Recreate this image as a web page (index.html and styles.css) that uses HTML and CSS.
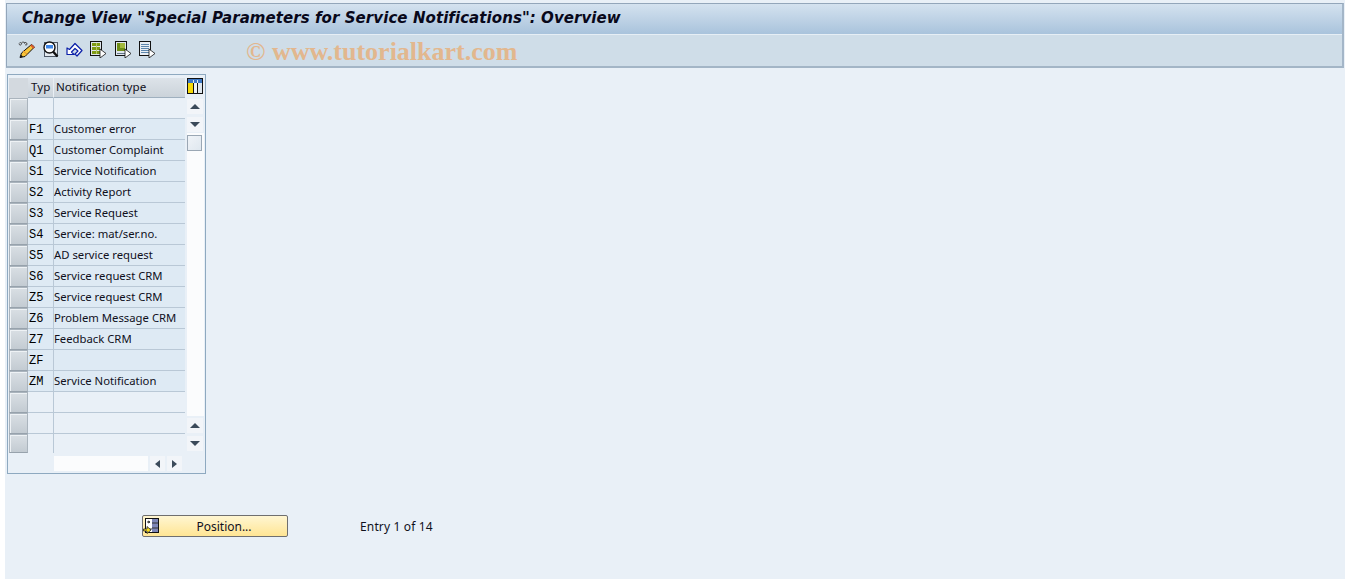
FILE: index.html
```html
<!DOCTYPE html>
<html lang="en">
<head>
<meta charset="utf-8">
<title>Change View</title>
<link rel="stylesheet" href="styles.css">
</head>
<body>
<div class="window">
  <header class="head">
    <h1 class="title">Change View "Special Parameters for Service Notifications": Overview</h1>
    <div class="toolbar">
      <svg class="tool" width="17" height="17" viewBox="0 0 17 17"><path d="M1 2.500c1-1.500 3-1 2.500.5S1 4.500 1.500 3M3.500 2c1-1.500 3-1 3 .5M6 2c1-1 3-.5 3 1s-1.500 1-2 .5" fill="none" stroke="#444" stroke-width="1"/><path d="M13.500 3.500l3 2.500-9.500 9.500-5 1 1.500-4.500z" fill="#f8c53a" stroke="#111" stroke-width="1"/><path d="M5 10l4.500 3.500" stroke="#e8902a" stroke-width="1"/><path d="M13 4l3 3" stroke="#d85a30" stroke-width="2"/><path d="M2 16.800l1-3 2 2z" fill="#111"/></svg>
      <svg class="tool" width="17" height="17" viewBox="0 0 17 17"><rect x="2.500" y="1.500" width="13" height="14" fill="#e4eaf0" stroke="#4d5866"/><circle cx="7.500" cy="6.500" r="5.500" fill="#fff" stroke="#111" stroke-width="1.400"/><path d="M4 4h7v3.500H4z" fill="#3f86e6"/><path d="M11 10.500l4.500 5" stroke="#111" stroke-width="2.400"/></svg>
      <svg class="tool" width="17" height="17" viewBox="0 0 17 17"><path d="M1 7V13.500H8L5.500 11 9 7.500 12 10 9 13l2 2 5-5.500-7-7-5.500 6z" fill="#fff" stroke="#0a1fa8" stroke-width="1.200" stroke-linejoin="round"/></svg>
      <svg class="tool" width="17" height="17" viewBox="0 0 17 17" shape-rendering="crispEdges"><rect x=".5" y=".5" width="11" height="14" fill="#dfe6ee" stroke="#111"/><path d="M2 2h8v3H2zM2 6h8v3H2zM2 10h8v3H2z" fill="#7f9a16"/><path d="M6 2v11" stroke="#b8cc60"/><path d="M10 8l6 4.500-6 4.500z" fill="#fff" stroke="#111" stroke-width=".8" shape-rendering="auto"/></svg>
      <svg class="tool" width="17" height="17" viewBox="0 0 17 17" shape-rendering="crispEdges"><rect x=".5" y=".5" width="11" height="14" fill="#dfe6ee" stroke="#111"/><rect x="2" y="2" width="8" height="8" fill="#6f8e16"/><path d="M5 2h5v5H5z" fill="#a2b83c"/><path d="M2 12h8" stroke="#66788c"/><path d="M10 8l6 4.500-6 4.500z" fill="#fff" stroke="#111" stroke-width=".8" shape-rendering="auto"/></svg>
      <svg class="tool" width="17" height="17" viewBox="0 0 17 17" shape-rendering="crispEdges"><rect x=".5" y=".5" width="11" height="14" fill="#e8eef4" stroke="#111"/><path d="M2 3h8M2 5h8M2 7h8M2 9h8M2 11h8" stroke="#5d86ad"/><path d="M10 8l6 4.500-6 4.500z" fill="#fff" stroke="#111" stroke-width=".8" shape-rendering="auto"/></svg>
      <span class="mark">© www.tutorialkart.com</span>
    </div>
  </header>

  <main class="content">
    <section class="panel">
      <div class="grid">
        <div class="row row-head">
          <span class="sel sel-corner"></span>
          <span class="cell c-typ head-cell head-typ">Typ</span>
          <span class="cell c-name head-cell">Notification type</span>
        </div>
        <div class="row"><span class="sel"></span><span class="cell c-typ"></span><span class="cell c-name"></span></div>
        <div class="row filled"><span class="sel"></span><span class="cell c-typ">F1</span><span class="cell c-name">Customer error</span></div>
        <div class="row filled"><span class="sel"></span><span class="cell c-typ">Q1</span><span class="cell c-name">Customer Complaint</span></div>
        <div class="row filled"><span class="sel"></span><span class="cell c-typ">S1</span><span class="cell c-name">Service Notification</span></div>
        <div class="row filled"><span class="sel"></span><span class="cell c-typ">S2</span><span class="cell c-name">Activity Report</span></div>
        <div class="row filled"><span class="sel"></span><span class="cell c-typ">S3</span><span class="cell c-name">Service Request</span></div>
        <div class="row filled"><span class="sel"></span><span class="cell c-typ">S4</span><span class="cell c-name">Service: mat/ser.no.</span></div>
        <div class="row filled"><span class="sel"></span><span class="cell c-typ">S5</span><span class="cell c-name">AD service request</span></div>
        <div class="row filled"><span class="sel"></span><span class="cell c-typ">S6</span><span class="cell c-name">Service request CRM</span></div>
        <div class="row filled"><span class="sel"></span><span class="cell c-typ">Z5</span><span class="cell c-name">Service request CRM</span></div>
        <div class="row filled"><span class="sel"></span><span class="cell c-typ">Z6</span><span class="cell c-name">Problem Message CRM</span></div>
        <div class="row filled"><span class="sel"></span><span class="cell c-typ">Z7</span><span class="cell c-name">Feedback CRM</span></div>
        <div class="row filled"><span class="sel"></span><span class="cell c-typ">ZF</span><span class="cell c-name"></span></div>
        <div class="row filled"><span class="sel"></span><span class="cell c-typ">ZM</span><span class="cell c-name">Service Notification</span></div>
        <div class="row"><span class="sel"></span><span class="cell c-typ"></span><span class="cell c-name"></span></div>
        <div class="row"><span class="sel"></span><span class="cell c-typ"></span><span class="cell c-name"></span></div>
        <div class="row row-last"><span class="sel"></span><span class="cell c-typ"></span><span class="cell c-name"></span></div>
        <div class="hbar">
          <span class="hbar-track"></span>
          <span class="sbtn sbtn-h"><i class="arrow a-left"></i></span>
          <span class="sbtn sbtn-h"><i class="arrow a-right"></i></span>
        </div>
      </div>
      <div class="vbar">
        <svg class="config" width="16" height="16" viewBox="0 0 17 17" shape-rendering="crispEdges"><rect x="0" y="0" width="17" height="17" fill="#111"/><rect x="1" y="1" width="15" height="4" fill="#3d78c4"/><rect x="1" y="5" width="5" height="11" fill="#f5d90a"/><rect x="7" y="5" width="4" height="11" fill="#eef2f6"/><rect x="12" y="5" width="4" height="11" fill="#dfe7ee"/><path d="M6 2h1v3H6zM11 2h1v3h-1z" fill="#dce8f4"/></svg>
        <span class="sbtn sbtn-v first"><i class="arrow a-up"></i></span>
        <span class="sbtn sbtn-v second"><i class="arrow a-down"></i></span>
        <span class="vtrack"><span class="thumb"></span></span>
        <span class="sbtn sbtn-v third"><i class="arrow a-up"></i></span>
        <span class="sbtn sbtn-v second"><i class="arrow a-down"></i></span>
      </div>
    </section>

    <div class="actions">
      <button class="btn" type="button">
        <svg class="btn-icon" width="16" height="17" viewBox="0 0 16 17"><rect x="2.500" y=".5" width="13" height="14" fill="#fff" stroke="#111"/><rect x="9" y="1" width="6" height="13" fill="#7e86b8"/><path d="M4 4h3M5 3l2 1-2 1M5 11h4M9 5h6M9 10h6" stroke="#333" fill="none"/><path d="M.5 11h3.500V8.500L8 12l-4 3.500V13H.5z" fill="#f7dc1e" stroke="#222" stroke-width=".8"/></svg>
        <span class="btn-label">Position...</span>
      </button>
      <span class="entry">Entry 1 of 14</span>
    </div>
  </main>
</div>
</body>
</html>
```

FILE: styles.css
```css
* { box-sizing: border-box; }

html, body { margin: 0; height: 100%; background: #fff; overflow: hidden; }

body { font-family: "Noto Sans", "DejaVu Sans", sans-serif; font-size: 12px; color: #10101c; }

.window {
  width: 1340px;
  height: 579px;
  margin-left: 5px;
  padding-top: 3px;
  background: #e9f0f7;
}

.head {
  margin: 0 1px;
  border: 1px solid #93a6ba;
  border-right-width: 2px;
  border-right-color: #a4b6c8;
  border-bottom: 2px solid #a3b5c6;
  box-shadow: inset 0 1px 0 #dbe6f0;
}

.title {
  margin: 0;
  height: 31px;
  padding: 4px 0 0 15px;
  background: linear-gradient(#d4e2ef, #a9c3dc);
  border-bottom: 1px solid #e6eef5;
  font: italic 700 15px/20px "DejaVu Sans", sans-serif;
  letter-spacing: 0.07px;
  color: #08081a;
  white-space: nowrap;
}

.toolbar {
  display: flex;
  align-items: center;
  height: 31px;
  padding: 0 0 3px 11px;
  background: #cfdde8;
}

.tool { margin-right: 7px; flex: none; }
.tool:nth-child(4) { margin-right: 8px; }

.mark {
  margin-left: 83px;
  margin-top: 5px;
  font: 700 26px/28px "Liberation Serif", serif;
  color: #e2b78e;
  white-space: nowrap;
}

.content { padding: 6px 0 0 2px; }

.panel {
  display: flex;
  width: 199px;
  height: 400px;
  padding: 3px 1px 0 1px;
  border: 1px solid #8ea9c0;
  background: #e9f0f7;
}

.grid { width: 176px; flex: none; }

.row { display: flex; height: 21px; }

.row-head { height: 20px; }
.row-last { height: 19px; }

.sel {
  width: 19px;
  flex: none;
  background: linear-gradient(#d9dfe4, #c3cbd2);
  border: 1px solid #aab4bd;
  border-bottom-color: #97a2ac;
  box-shadow: inset 1px 1px 0 #eef2f5;
}

.sel-corner { background: #d3d9df; border-color: #d3d9df; box-shadow: none; }

.cell {
  display: block;
  border-bottom: 1px solid #b9c8d6;
  border-right: 1px solid #b9c8d6;
  font-size: 11.3px;
  line-height: 20px;
  white-space: nowrap;
  overflow: hidden;
}

.c-typ {
  width: 26px;
  flex: none;
  padding-left: 1px;
  font: 400 12px/22px "Liberation Mono", monospace;
  color: #000;
}

.c-name { width: 131px; flex: none; padding-left: 0; border-right: 0; }

.filled .cell { background: #deeaf4; }
.row-last .cell { border-bottom: 0; }

.head-cell {
  background: linear-gradient(#dde3e9, #cbd3da);
  border-color: #e9eef3;
  border-bottom: 1px solid #9fb0bf;
  font: 400 11.6px/18px "Noto Sans", sans-serif;
  color: #10101c;
  padding-left: 2px;
}

.head-typ { padding-left: 3px; }

.hbar { display: flex; margin: 3px 0 0 45px; height: 15px; }
.hbar-track { width: 94px; background: #fbfcfd; flex: none; }

.sbtn {
  display: flex;
  align-items: center;
  justify-content: center;
  background: #f2f5f9;
  flex: none;
}

.sbtn-h { width: 15px; margin-left: 2px; }
.sbtn-v { width: 16px; height: 15px; }
.first { margin-top: 5px; }
.second { margin-top: 3px; }
.third { margin-top: 2px; }

.vbar { width: 17px; margin-left: 2px; display: flex; flex-direction: column; flex: none; }

.config { display: block; flex: none; }

.vtrack { height: 283px; margin-top: 1px; padding-top: 2px; background: #fbfcfd; flex: none; }

.thumb {
  display: block;
  width: 15px;
  height: 16px;
  background: linear-gradient(135deg, #f0f4f8, #dfe7ef);
  border: 1px solid #9aa7b4;
}

.arrow { display: block; width: 0; height: 0; border-style: solid; border-color: transparent; }
.a-up { border-width: 0 5px 5px; border-bottom-color: #3b4a5a; }
.a-down { border-width: 5px 5px 0; border-top-color: #3b4a5a; }
.a-left { border-width: 4px 5px 4px 0; border-right-color: #3b4a5a; }
.a-right { border-width: 4px 0 4px 5px; border-left-color: #3b4a5a; }

.actions { display: flex; align-items: center; margin: 41px 0 0 135px; }

.btn {
  display: flex;
  align-items: center;
  width: 146px;
  height: 22px;
  padding: 0;
  border: 1px solid #6f6f6f;
  border-radius: 2px;
  background: linear-gradient(#fff6d2, #ffe594);
  font: 400 12px "Noto Sans", sans-serif;
  color: #10101c;
}

.btn-icon { flex: none; }
.btn-label { flex: 1; padding-left: 2px; text-align: center; }

.entry { margin-left: 72px; letter-spacing: 0.15px; }
```
